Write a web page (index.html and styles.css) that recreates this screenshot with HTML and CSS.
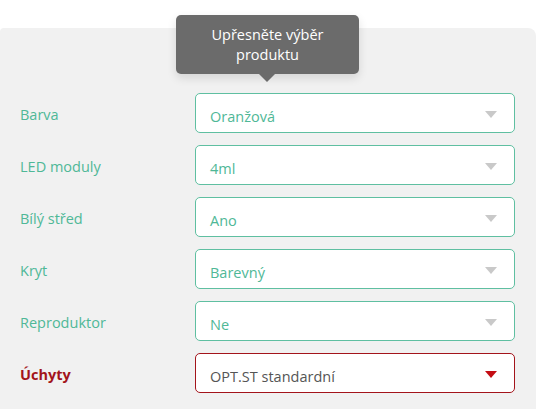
FILE: index.html
```html
<!DOCTYPE html>
<html>
<head>
<title>Upřesněte výběr produktu</title>
<link rel="stylesheet" href="styles.css">
</head>
<body>
	<section class="panel">
		<div class="tip">Upřesněte výběr<br>produktu</div>
		<form class="options">
			<label class="optLabel">Barva</label>
			<div class="select"><span>Oranžová</span><i class="arrow"></i></div>
			<label class="optLabel">LED moduly</label>
			<div class="select"><span>4ml</span><i class="arrow"></i></div>
			<label class="optLabel">Bílý střed</label>
			<div class="select"><span>Ano</span><i class="arrow"></i></div>
			<label class="optLabel">Kryt</label>
			<div class="select"><span>Barevný</span><i class="arrow"></i></div>
			<label class="optLabel">Reproduktor</label>
			<div class="select"><span>Ne</span><i class="arrow"></i></div>
			<label class="optLabel required">Úchyty</label>
			<div class="select required"><span>OPT.ST standardní</span><i class="arrow"></i></div>
		</form>
	</section>
</body>
</html>
```
FILE: styles.css
```css
body{
	margin:0;
	background-color:white;
	font-family:"Open Sans", "Liberation Sans", sans-serif;
	font-size:14px;
}
.panel{
	position:relative;
	margin-top:28px;
	width:536px;
	height:381px;
	background-color:#f1f1f1;
	border-radius:4px 8px 0 0;
}
.options{
	display:grid;
	grid-template-columns:175px 320px;
	row-gap:12px;
	padding:65px 0 0 20px;
}
.optLabel{
	display:flex;
	align-items:center;
	color:#4fb897;
	font-size:14.5px;
	padding-top:2px;
}
.select{
	box-sizing:border-box;
	height:40px;
	display:flex;
	align-items:center;
	justify-content:space-between;
	padding:6px 17px 0 14px;
	background-color:white;
	border:1px solid #5fbfa1;
	border-radius:5px;
	color:#4fb897;
	font-size:14.5px;
}
.arrow{
	width:0;
	height:0;
	border-left:6px solid transparent;
	border-right:6px solid transparent;
	border-top:7px solid #c9c9c9;
	margin-top:-4px;
}
.optLabel.required{
	color:#a3141b;
	font-weight:bold;
}
.select.required{
	border-color:#a3141b;
	color:#555555;
}
.select.required .arrow{
	border-top-color:#c40d14;
}
.tip{
	position:absolute;
	left:176px;
	top:-13px;
	width:183px;
	height:59px;
	box-sizing:border-box;
	padding-top:10px;
	background-color:#6b6b6b;
	border-radius:5px;
	box-shadow:0 4px 10px rgba(0,0,0,0.12);
	color:white;
	text-align:center;
	font-size:14.5px;
	line-height:20px;
}
.tip:after{
	content:"";
	position:absolute;
	left:83px;
	bottom:-8px;
	border-left:8px solid transparent;
	border-right:8px solid transparent;
	border-top:8px solid #6b6b6b;
}
```
